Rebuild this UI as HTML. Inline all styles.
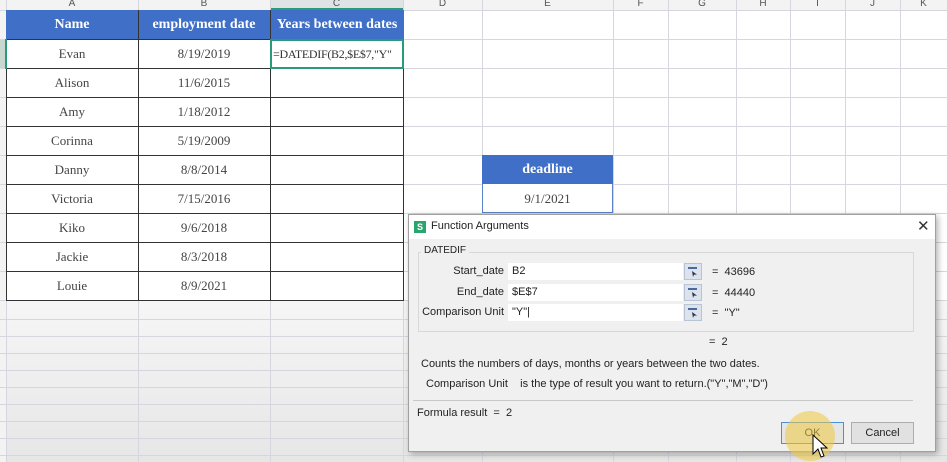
<!DOCTYPE html>
<html><head><meta charset="utf-8"><style>
*{margin:0;padding:0;box-sizing:border-box}
body{width:947px;height:462px;overflow:hidden;background:#fff;position:relative;font-family:"Liberation Serif",serif;color:#333}
.a{position:absolute}
.v{position:absolute;top:0;width:1px;height:462px;background:#d6d6de}
.h{position:absolute;left:0;height:1px;width:947px;background:#d6d6de}
.ch{position:absolute;top:0;height:10px;font:10px "Liberation Sans",sans-serif;color:#555;text-align:center;line-height:8px;overflow:hidden}
.c{position:absolute;height:29px;line-height:29px;text-align:center;font-size:13px;color:#444}
.hd{background:#3f6fc6;color:#fff;font-weight:bold;font-size:14px}
.dlg{font-family:"Liberation Sans",sans-serif;font-size:11px;color:#222}
.inp{position:absolute;height:17px;background:#fff;line-height:17px;padding-left:4px;font-size:11px}
.btn{position:absolute;width:18px;height:17px;background:#dbe3ee;border:1px solid #b8c4d4}
.btn:after{content:"";position:absolute;left:3px;top:3px;width:9px;height:2px;background:#4a6a9a}
.btn:before{content:"";position:absolute;left:7px;top:7px;width:5px;height:6px;background:#334;clip-path:polygon(0 0,100% 60%,40% 60%,20% 100%)}
</style></head><body>
<div class="a" style="left:0;top:300px;width:947px;height:162px;background:linear-gradient(#f6f6f6,#e6e6e6)"></div>
<div class="a" style="left:0;top:0;width:947px;height:10px;background:#f3f3f3"></div>
<div class="a" style="left:270px;top:0;width:133px;height:10px;background:#dfe3e3;border-bottom:2px solid #2a9b7a"></div>
<div class="a" style="left:0;top:0;width:6px;height:462px;background:#f3f3f3"></div>
<div class="a" style="left:0;top:39px;width:6px;height:29px;background:#c8d8d0"></div>
<div class="v" style="left:6px"></div><div class="v" style="left:138px"></div><div class="v" style="left:270px"></div><div class="v" style="left:403px"></div><div class="v" style="left:482px"></div><div class="v" style="left:613px"></div><div class="v" style="left:668px"></div><div class="v" style="left:736px"></div><div class="v" style="left:790px"></div><div class="v" style="left:845px"></div><div class="v" style="left:900px"></div>
<div class="h" style="top:10px"></div><div class="h" style="top:39px"></div><div class="h" style="top:68px"></div><div class="h" style="top:97px"></div><div class="h" style="top:126px"></div><div class="h" style="top:155px"></div><div class="h" style="top:184px"></div><div class="h" style="top:213px"></div><div class="h" style="top:242px"></div><div class="h" style="top:271px"></div><div class="h" style="top:300px"></div><div class="h" style="top:319px"></div><div class="h" style="top:336px"></div><div class="h" style="top:353px"></div><div class="h" style="top:370px"></div><div class="h" style="top:387px"></div><div class="h" style="top:404px"></div><div class="h" style="top:421px"></div><div class="h" style="top:438px"></div><div class="h" style="top:455px"></div>
<div class="ch" style="left:6px;width:132px">A</div><div class="ch" style="left:138px;width:132px">B</div><div class="ch" style="left:270px;width:133px">C</div><div class="ch" style="left:403px;width:79px">D</div><div class="ch" style="left:482px;width:131px">E</div><div class="ch" style="left:613px;width:55px">F</div><div class="ch" style="left:668px;width:68px">G</div><div class="ch" style="left:736px;width:54px">H</div><div class="ch" style="left:790px;width:55px">I</div><div class="ch" style="left:845px;width:55px">J</div><div class="ch" style="left:900px;width:47px">K</div>
<div class="a" style="left:6px;top:10px;width:398px;height:291px;border:1px solid #333;background:#fff"></div>
<div class="c hd" style="left:6px;top:10px;width:132px">Name</div>
<div class="c hd" style="left:138px;top:10px;width:132px">employment date</div>
<div class="c hd" style="left:270px;top:10px;width:134px">Years between dates</div>
<div class="a" style="left:138px;top:10px;width:1px;height:291px;background:#333"></div>
<div class="a" style="left:270px;top:10px;width:1px;height:291px;background:#333"></div>
<div class="a" style="left:6px;top:39px;width:398px;height:1px;background:#333"></div>
<div class="a" style="left:6px;top:68px;width:398px;height:1px;background:#333"></div>
<div class="a" style="left:6px;top:97px;width:398px;height:1px;background:#333"></div>
<div class="a" style="left:6px;top:126px;width:398px;height:1px;background:#333"></div>
<div class="a" style="left:6px;top:155px;width:398px;height:1px;background:#333"></div>
<div class="a" style="left:6px;top:184px;width:398px;height:1px;background:#333"></div>
<div class="a" style="left:6px;top:213px;width:398px;height:1px;background:#333"></div>
<div class="a" style="left:6px;top:242px;width:398px;height:1px;background:#333"></div>
<div class="a" style="left:6px;top:271px;width:398px;height:1px;background:#333"></div>
<div class="c" style="left:6px;top:39px;width:132px">Evan</div><div class="c" style="left:138px;top:39px;width:132px">8/19/2019</div>
<div class="c" style="left:6px;top:68px;width:132px">Alison</div><div class="c" style="left:138px;top:68px;width:132px">11/6/2015</div>
<div class="c" style="left:6px;top:97px;width:132px">Amy</div><div class="c" style="left:138px;top:97px;width:132px">1/18/2012</div>
<div class="c" style="left:6px;top:126px;width:132px">Corinna</div><div class="c" style="left:138px;top:126px;width:132px">5/19/2009</div>
<div class="c" style="left:6px;top:155px;width:132px">Danny</div><div class="c" style="left:138px;top:155px;width:132px">8/8/2014</div>
<div class="c" style="left:6px;top:184px;width:132px">Victoria</div><div class="c" style="left:138px;top:184px;width:132px">7/15/2016</div>
<div class="c" style="left:6px;top:213px;width:132px">Kiko</div><div class="c" style="left:138px;top:213px;width:132px">9/6/2018</div>
<div class="c" style="left:6px;top:242px;width:132px">Jackie</div><div class="c" style="left:138px;top:242px;width:132px">8/3/2018</div>
<div class="c" style="left:6px;top:271px;width:132px">Louie</div><div class="c" style="left:138px;top:271px;width:132px">8/9/2021</div>
<div class="a" style="left:270px;top:39px;width:134px;height:30px;border:2px solid #2a9b7a;background:#fff;font-size:12px;letter-spacing:-0.3px;line-height:26px;padding-left:1px;white-space:nowrap;overflow:hidden;color:#333">=DATEDIF(B2,$E$7,"Y"</div>
<div class="a" style="left:5px;top:39px;width:2px;height:30px;background:#2a9b7a"></div>
<div class="c hd" style="left:482px;top:155px;width:131px">deadline</div>
<div class="c" style="left:482px;top:184px;width:131px;border:1px solid #5a82c8;border-top:none;background:#fff">9/1/2021</div>
<div class="a dlg" style="left:408px;top:214px;width:528px;height:238px;background:#f0f0f0;border:1px solid #a0a0a0;box-shadow:2px 2px 6px rgba(0,0,0,.3)">
 <div class="a" style="left:0;top:0;width:526px;height:24px;background:#fff"></div>
 <div class="a" style="left:5px;top:6px;width:12px;height:12px;background:#2aa56e;color:#fff;font-size:9px;font-weight:bold;text-align:center;line-height:12px">S</div>
 <div class="a" style="left:22px;top:5px;font-size:11px">Function Arguments</div>
 <div class="a" style="left:508px;top:2px;font-size:15px;color:#333">✕</div>
 <div class="a" style="left:9px;top:37px;width:496px;height:80px;border:1px solid #d8d8d8"></div>
 <div class="a" style="left:12px;top:30px;background:#f0f0f0;padding:0 3px;font-size:10px">DATEDIF</div>
 <div class="a" style="left:20px;top:50px;width:75px;text-align:right">Start_date</div>
 <div class="a" style="left:20px;top:71px;width:75px;text-align:right">End_date</div>
 <div class="a" style="left:0;top:91px;width:95px;text-align:right">Comparison Unit</div>
 <div class="inp" style="left:99px;top:48px;width:175px">B2</div><div class="btn" style="left:275px;top:48px"></div>
 <div class="inp" style="left:99px;top:69px;width:175px">$E$7</div><div class="btn" style="left:275px;top:69px"></div>
 <div class="inp" style="left:99px;top:89px;width:175px">"Y"|</div><div class="btn" style="left:275px;top:89px"></div>
 <div class="a" style="left:303px;top:51px">= &nbsp;43696</div>
 <div class="a" style="left:303px;top:72px">= &nbsp;44440</div>
 <div class="a" style="left:303px;top:92px">= &nbsp;"Y"</div>
 <div class="a" style="left:300px;top:121px">= &nbsp;2</div>
 <div class="a" style="left:12px;top:143px">Counts the numbers of days, months or years between the two dates.</div>
 <div class="a" style="left:17px;top:163px">Comparison Unit &nbsp;&nbsp; is the type of result you want to return.("Y","M","D")</div>
 <div class="a" style="left:4px;top:185px;width:500px;height:1px;background:#c8c8c8"></div>
 <div class="a" style="left:8px;top:192px">Formula result &nbsp;= &nbsp;2</div>
 <div class="a" style="left:372px;top:207px;width:63px;height:22px;border:1px solid #4a90d9;background:#e5e5e5;text-align:center;line-height:20px">OK</div>
 <div class="a" style="left:442px;top:207px;width:63px;height:22px;border:1px solid #adadad;background:#e1e1e1;text-align:center;line-height:20px">Cancel</div>
 <div class="a" style="left:376px;top:196px;width:50px;height:50px;border-radius:50%;background:rgba(240,200,60,.55)"></div>
</div>
<svg class="a" style="left:812px;top:434px" width="16" height="26" viewBox="0 0 16 26"><path d="M1 1 L1 20 L6 15 L9 23 L12 22 L9 14 L15 14 Z" fill="#fff" stroke="#000" stroke-width="1"/></svg>
</body></html>
